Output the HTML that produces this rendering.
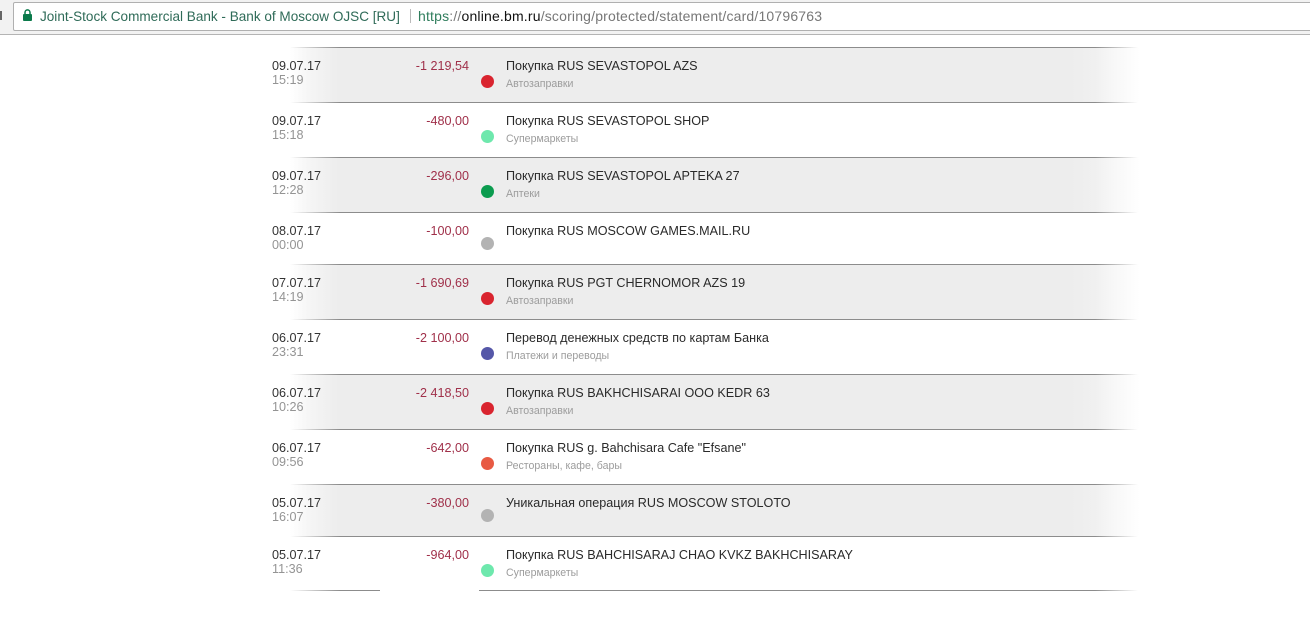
<!DOCTYPE html>
<html lang="ru"><head><meta charset="utf-8"><title>Statement</title>
<style>
html,body{margin:0;padding:0;background:#fff;width:1310px;height:617px;overflow:hidden;font-family:"Liberation Sans",sans-serif}
#bar{position:absolute;left:0;top:0;width:1310px;height:34px;background:#f2f2f2;border-bottom:1px solid #b4b4b4;box-sizing:content-box}
#addr{position:absolute;left:13px;top:2px;width:1300px;height:27px;background:#fff;border:1px solid #b0b0b0;border-radius:2px}
.u{position:absolute;top:9px;line-height:16px;white-space:nowrap;font-family:"Liberation Sans",sans-serif}
.bg{position:absolute;left:290px;width:850px;background:linear-gradient(90deg,rgba(237,237,237,0) 0,rgba(237,237,237,.55) 20px,#ededed 48px,#ededed 780px,#f0f0f0 805px,rgba(245,245,245,.7) 825px,rgba(240,240,240,0) 850px)}
.ln{position:absolute;left:290px;width:850px;height:1px;background:linear-gradient(90deg,rgba(140,140,140,0) 0,#8c8c8c 50px,#8c8c8c 805px,rgba(140,140,140,0) 848px)}
.t{position:absolute;white-space:nowrap;line-height:14px;font-size:12.6px;margin-top:1px}
.d{left:272px;color:#333}
.h{left:272px;color:#949494}
.a{right:841px;color:#a0304a;text-align:right}
.n{left:506px;color:#2a2a2a}
.s{left:506px;color:#9c9c9c;font-size:10.6px}
.o{position:absolute;left:481px;width:13px;height:13px;border-radius:50%}
</style></head><body>
<div id="bar"><div id="addr"></div>
<div style="position:absolute;left:0;top:11px;width:2px;height:9px;background:#666"></div>
<svg style="position:absolute;left:22.5px;top:9px" width="9" height="12" viewBox="0 0 9 12"><path d="M2 6V3.4a2.5 2.5 0 0 1 5 0V6" fill="none" stroke="#0b7a4b" stroke-width="1.5"/><rect x="0" y="5" width="9" height="7" rx="1" fill="#0b7a4b"/></svg>
<span class="u" style="left:40px;color:#2f6b58;font-size:13.55px">Joint-Stock Commercial Bank - Bank of Moscow OJSC [RU]</span>
<div style="position:absolute;left:410px;top:9px;width:1px;height:14px;background:#bbb"></div>
<span class="u" style="left:418px;top:8px;font-size:14px;letter-spacing:.18px"><span style="color:#2f7d5c">https</span><span style="color:#777">://</span><span style="color:#111">online.bm.ru</span><span style="color:#777">/scoring/protected/statement/card/10796763</span></span>
</div>

<div class="bg" style="top:47px;height:55px"></div>
<div class="bg" style="top:157px;height:55px"></div>
<div class="bg" style="top:264px;height:55px"></div>
<div class="bg" style="top:374px;height:55px"></div>
<div class="bg" style="top:484px;height:52px"></div>

<div class="ln" style="top:47px"></div>
<div class="ln" style="top:102px"></div>
<div class="ln" style="top:157px"></div>
<div class="ln" style="top:212px"></div>
<div class="ln" style="top:264px"></div>
<div class="ln" style="top:319px"></div>
<div class="ln" style="top:374px"></div>
<div class="ln" style="top:429px"></div>
<div class="ln" style="top:484px"></div>
<div class="ln" style="top:536px"></div>
<div style="position:absolute;left:290px;top:590px;width:90px;height:1px;background:linear-gradient(90deg,rgba(140,140,140,0) 0,#8c8c8c 50px)"></div>
<div style="position:absolute;left:479px;top:590px;width:661px;height:1px;background:linear-gradient(90deg,#8c8c8c 0,#8c8c8c 616px,rgba(140,140,140,0) 659px)"></div>

<div class="t d" style="top:58px">09.07.17</div><div class="t h" style="top:72px">15:19</div><div class="t a" style="top:58px">-1 219,54</div><div class="o" style="top:75px;background:#d9242f"></div><div class="t n" style="top:58px">Покупка RUS SEVASTOPOL AZS</div><div class="t s" style="top:76px">Автозаправки</div>

<div class="t d" style="top:113px">09.07.17</div><div class="t h" style="top:127px">15:18</div><div class="t a" style="top:113px">-480,00</div><div class="o" style="top:130px;background:#6ee8ad"></div><div class="t n" style="top:113px">Покупка RUS SEVASTOPOL SHOP</div><div class="t s" style="top:131px">Супермаркеты</div>

<div class="t d" style="top:168px">09.07.17</div><div class="t h" style="top:182px">12:28</div><div class="t a" style="top:168px">-296,00</div><div class="o" style="top:185px;background:#0b9c4f"></div><div class="t n" style="top:168px">Покупка RUS SEVASTOPOL APTEKA 27</div><div class="t s" style="top:186px">Аптеки</div>

<div class="t d" style="top:223px">08.07.17</div><div class="t h" style="top:237px">00:00</div><div class="t a" style="top:223px">-100,00</div><div class="o" style="top:237px;background:#b3b3b3"></div><div class="t n" style="top:223px">Покупка RUS MOSCOW GAMES.MAIL.RU</div>

<div class="t d" style="top:275px">07.07.17</div><div class="t h" style="top:289px">14:19</div><div class="t a" style="top:275px">-1 690,69</div><div class="o" style="top:292px;background:#d9242f"></div><div class="t n" style="top:275px">Покупка RUS PGT CHERNOMOR AZS 19</div><div class="t s" style="top:293px">Автозаправки</div>

<div class="t d" style="top:330px">06.07.17</div><div class="t h" style="top:344px">23:31</div><div class="t a" style="top:330px">-2 100,00</div><div class="o" style="top:347px;background:#5557a8"></div><div class="t n" style="top:330px">Перевод денежных средств по картам Банка</div><div class="t s" style="top:348px">Платежи и переводы</div>

<div class="t d" style="top:385px">06.07.17</div><div class="t h" style="top:399px">10:26</div><div class="t a" style="top:385px">-2 418,50</div><div class="o" style="top:402px;background:#d9242f"></div><div class="t n" style="top:385px">Покупка RUS BAKHCHISARAI OOO KEDR 63</div><div class="t s" style="top:403px">Автозаправки</div>

<div class="t d" style="top:440px">06.07.17</div><div class="t h" style="top:454px">09:56</div><div class="t a" style="top:440px">-642,00</div><div class="o" style="top:457px;background:#e85a43"></div><div class="t n" style="top:440px">Покупка RUS g. Bahchisara Cafe "Efsane"</div><div class="t s" style="top:458px">Рестораны, кафе, бары</div>

<div class="t d" style="top:495px">05.07.17</div><div class="t h" style="top:509px">16:07</div><div class="t a" style="top:495px">-380,00</div><div class="o" style="top:509px;background:#b3b3b3"></div><div class="t n" style="top:495px">Уникальная операция RUS MOSCOW STOLOTO</div>

<div class="t d" style="top:547px">05.07.17</div><div class="t h" style="top:561px">11:36</div><div class="t a" style="top:547px">-964,00</div><div class="o" style="top:564px;background:#6ee8ad"></div><div class="t n" style="top:547px">Покупка RUS BAHCHISARAJ CHAO KVKZ BAKHCHISARAY</div><div class="t s" style="top:565px">Супермаркеты</div>
</body></html>
